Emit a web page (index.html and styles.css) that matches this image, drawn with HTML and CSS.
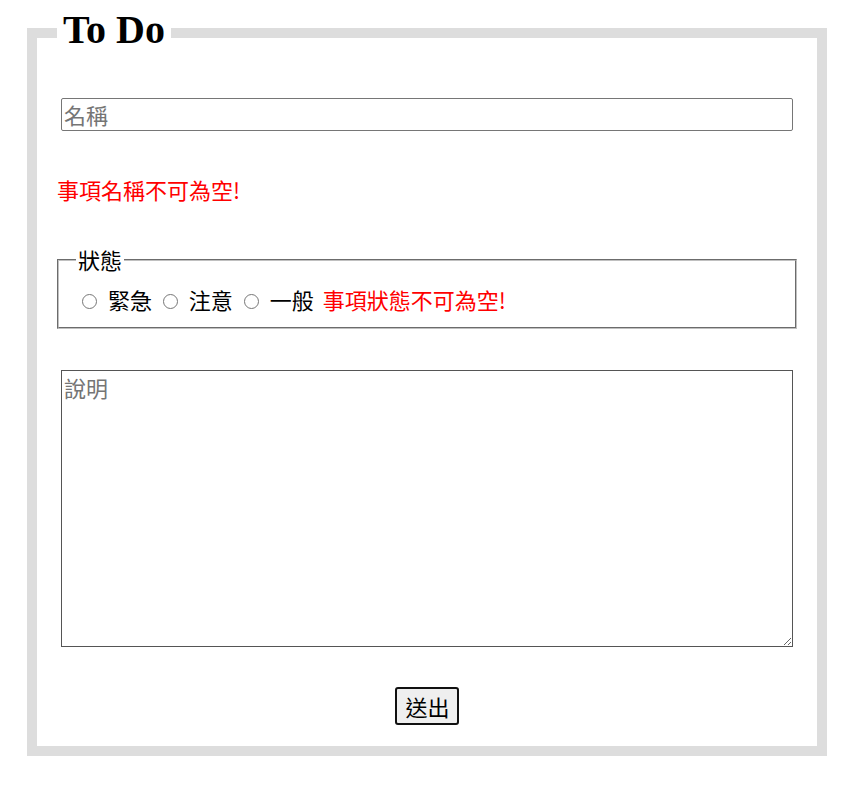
FILE: index.html
```html
<!DOCTYPE html>
<html lang="zh-Hant">
<head>
<meta charset="utf-8">
<title>To Do</title>
<link rel="stylesheet" href="styles.css">
</head>
<body>
<form class="todo-form">
  <fieldset class="todo">
    <legend class="todo-title">To Do</legend>
    <div class="row">
      <input class="field" type="text" placeholder="名稱">
    </div>
    <div class="row row-error error">事項名稱不可為空!</div>
    <div class="row">
      <fieldset class="status">
        <legend class="status-title">狀態</legend>
        <input type="radio" name="s" id="s1"> <label for="s1">緊急</label>
        <input type="radio" name="s" id="s2"> <label for="s2">注意</label>
        <input type="radio" name="s" id="s3"> <label for="s3">一般</label>
        <span class="error inline-error">事項狀態不可為空!</span>
      </fieldset>
    </div>
    <div class="row row-area">
      <textarea class="field area" placeholder="說明"></textarea>
    </div>
    <div class="row actions">
      <button type="submit" class="submit">送出</button>
    </div>
  </fieldset>
</form>
</body>
</html>
```

FILE: styles.css
```css
html, body {
  margin: 0;
  padding: 0;
  background: #fff;
}

body {
  font-family: "Noto Sans CJK TC", "Noto Sans", sans-serif;
  font-size: 22px;
  line-height: 29px;
  color: #000;
}

.todo-form {
  padding: 6px 0 0 27px;
}

.todo {
  width: 800px;
  box-sizing: border-box;
  margin: 0;
  border: 10px solid #ddd;
  padding: 19px 20px 21px;
}

.todo-title {
  font-family: "Liberation Serif", serif;
  font-weight: bold;
  font-size: 40px;
  line-height: normal;
  padding: 0 6px 6px;
}

.row {
  padding: 20px 0;
}

.row-error {
  padding: 24px 0 21px;
}

.row-area {
  padding-top: 21px;
}

.field {
  display: block;
  box-sizing: border-box;
  width: calc(100% - 8px);
  margin: 0 4px;
  font-family: "Noto Sans CJK TC", sans-serif;
  font-size: 22px;
  line-height: 29px;
  border: 1px solid #767676;
  border-radius: 2px;
  padding: 1px 2px;
  color: #000;
}

.field::placeholder {
  color: #757575;
}

.area {
  height: 277px;
  padding: 2px;
  resize: both;
  border-radius: 0;
  border-color: #555;
}

.error {
  color: #ff0000;
}

.inline-error {
  margin-left: 4px;
}

.status {
  margin: 0;
  border: 2px groove #c0c0c0;
  padding: 11px 12px 13px 17px;
}

.status-title {
  padding: 0 2px;
}

.status input[type="radio"] {
  margin: 0 6px 0 6px;
  width: 15px;
  height: 15px;
  vertical-align: 0;
}

.actions {
  text-align: center;
  padding-bottom: 0;
}

.submit {
  font-family: "Noto Sans CJK TC", sans-serif;
  font-size: 22px;
  line-height: 28px;
  background: #efefef;
  border: 2px solid #111;
  border-radius: 3px;
  padding: 3px 7px 3px 8px;
  color: #000;
}
```
